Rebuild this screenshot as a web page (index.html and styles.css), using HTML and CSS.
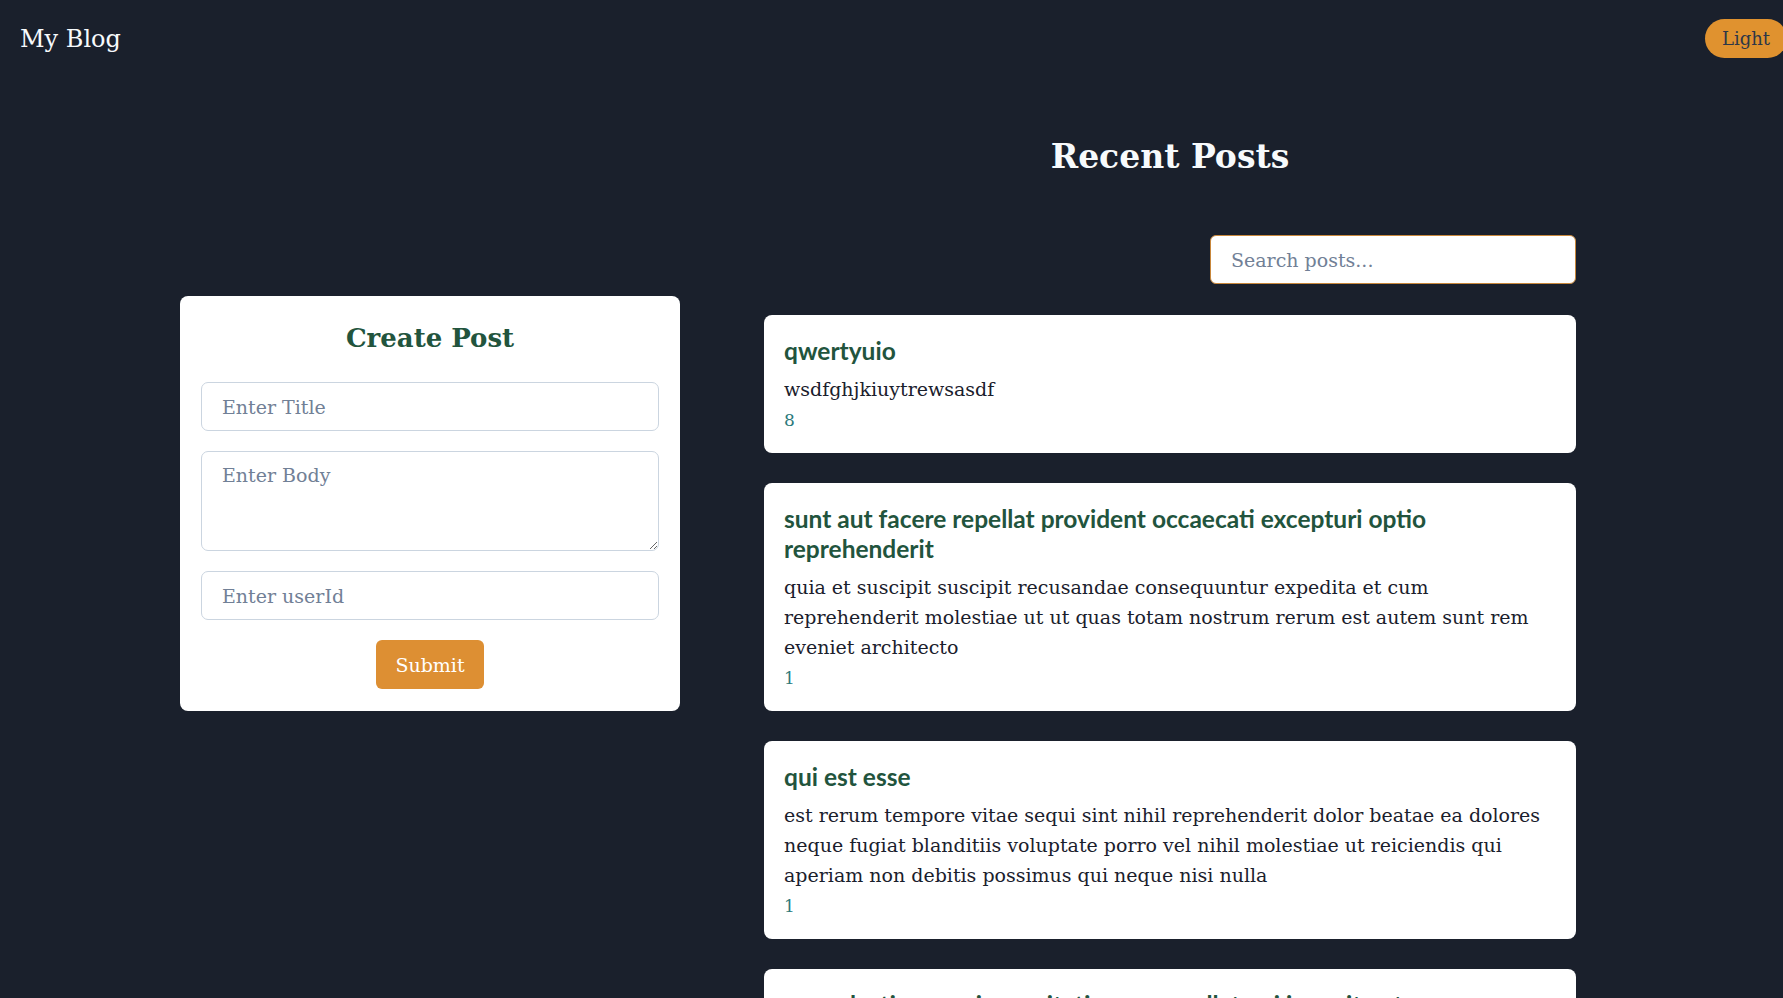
FILE: index.html
```html
<!DOCTYPE html>
<html lang="en">
<head>
<meta charset="utf-8">
<title>My Blog</title>
<link rel="stylesheet" href="styles.css">
</head>
<body>
<header class="topbar">
  <h1 class="brand">My Blog</h1>
  <button class="theme-btn" type="button">Light</button>
</header>
<main class="layout">
  <section class="create-col">
    <form class="create-card">
      <h2 class="create-title">Create Post</h2>
      <input class="field" type="text" placeholder="Enter Title">
      <textarea class="field field-area" placeholder="Enter Body"></textarea>
      <input class="field" type="text" placeholder="Enter userId">
      <button class="submit-btn" type="button">Submit</button>
    </form>
  </section>
  <section class="posts-col">
    <h2 class="posts-title">Recent Posts</h2>
    <div class="search-row">
      <input class="search" type="text" placeholder="Search posts...">
    </div>
    <article class="post">
      <h3 class="post-title">qwertyuio</h3>
      <p class="post-body">wsdfghjkiuytrewsasdf</p>
      <p class="post-user">8</p>
    </article>
    <article class="post">
      <h3 class="post-title">sunt aut facere repellat provident occaecati excepturi optio reprehenderit</h3>
      <p class="post-body">quia et suscipit suscipit recusandae consequuntur expedita et cum reprehenderit molestiae ut ut quas totam nostrum rerum est autem sunt rem eveniet architecto</p>
      <p class="post-user">1</p>
    </article>
    <article class="post">
      <h3 class="post-title">qui est esse</h3>
      <p class="post-body">est rerum tempore vitae sequi sint nihil reprehenderit dolor beatae ea dolores neque fugiat blanditiis voluptate porro vel nihil molestiae ut reiciendis qui aperiam non debitis possimus qui neque nisi nulla</p>
      <p class="post-user">1</p>
    </article>
    <article class="post">
      <h3 class="post-title">ea molestias quasi exercitationem repellat qui ipsa sit aut</h3>
      <p class="post-body">et iusto sed quo iure voluptatem occaecati omnis eligendi aut ad voluptatem doloribus vel accusantium quis pariatur molestiae porro eius odio et labore et velit aut</p>
      <p class="post-user">1</p>
    </article>
  </section>
</main>
</body>
</html>
```
FILE: styles.css
```css
* { box-sizing: border-box; }
html, body { margin: 0; padding: 0; }
body {
  background: #1a202c;
  font-family: "DejaVu Serif", "Liberation Serif", serif;
  color: #1a202c;
}
.topbar {
  display: flex;
  justify-content: space-between;
  align-items: center;
  height: 77px;
  padding: 0 0 0 20px;
}
.brand {
  margin: 0;
  font-size: 24px;
  font-weight: normal;
  color: #f7fafc;
}
.theme-btn {
  font-family: inherit;
  font-size: 18px;
  background: #e0922f;
  color: #2d3748;
  border: none;
  border-radius: 20px;
  height: 39px;
  padding: 0 17px;
  margin-right: -4px;
}
.layout {
  display: flex;
  align-items: flex-start;
  gap: 84px;
  padding-left: 180px;
}
.create-col { width: 500px; padding-top: 219px; }
.create-card {
  background: #fff;
  border-radius: 8px;
  padding: 22px 21px 22px;
  display: flex;
  flex-direction: column;
  align-items: center;
  gap: 20px;
}
.create-title {
  margin: 0 0 4px;
  font-size: 26px;
  font-weight: bold;
  color: #22543d;
  line-height: 40px;
}
.field {
  width: 100%;
  height: 49px;
  border: 1px solid #cbd5e0;
  border-radius: 7px;
  padding: 0 20px;
  font-family: inherit;
  font-size: 19px;
  color: #2d3748;
  background: #fff;
}
.field::placeholder { color: #718096; }
.field-area {
  height: 100px;
  padding-top: 12px;
  resize: vertical;
}
.submit-btn {
  font-family: inherit;
  font-size: 19px;
  background: #dd8f33;
  color: #fff;
  border: none;
  border-radius: 6px;
  height: 49px;
  padding: 0 19px;
}
.posts-col {
  width: 812px;
  display: flex;
  flex-direction: column;
  gap: 30px;
}
.posts-title {
  margin: 57px 0 0;
  text-align: center;
  font-size: 33px;
  line-height: 46px;
  font-weight: bold;
  color: #f7fafc;
}
.search-row {
  display: flex;
  justify-content: flex-end;
  margin-top: 25px;
  margin-bottom: 1px;
}
.search {
  width: 366px;
  height: 49px;
  border: 1px solid #c8873b;
  border-radius: 6px;
  padding: 0 20px;
  font-family: inherit;
  font-size: 19px;
  background: #fff;
}
.search::placeholder { color: #718096; }
.post {
  background: #fff;
  border-radius: 8px;
  padding: 21px 20px 20px;
}
.post-title {
  margin: 0 0 8px;
  font-family: "Lato", "Liberation Sans", sans-serif;
  font-weight: bold;
  font-size: 24.5px;
  line-height: 30px;
  color: #22543d;
}
.post-body {
  margin: 0;
  font-size: 19px;
  line-height: 30px;
  color: #1a202c;
}
.post-user {
  margin: 3px 0 0;
  font-size: 17px;
  line-height: 26px;
  color: #2c7a7b;
}
```
